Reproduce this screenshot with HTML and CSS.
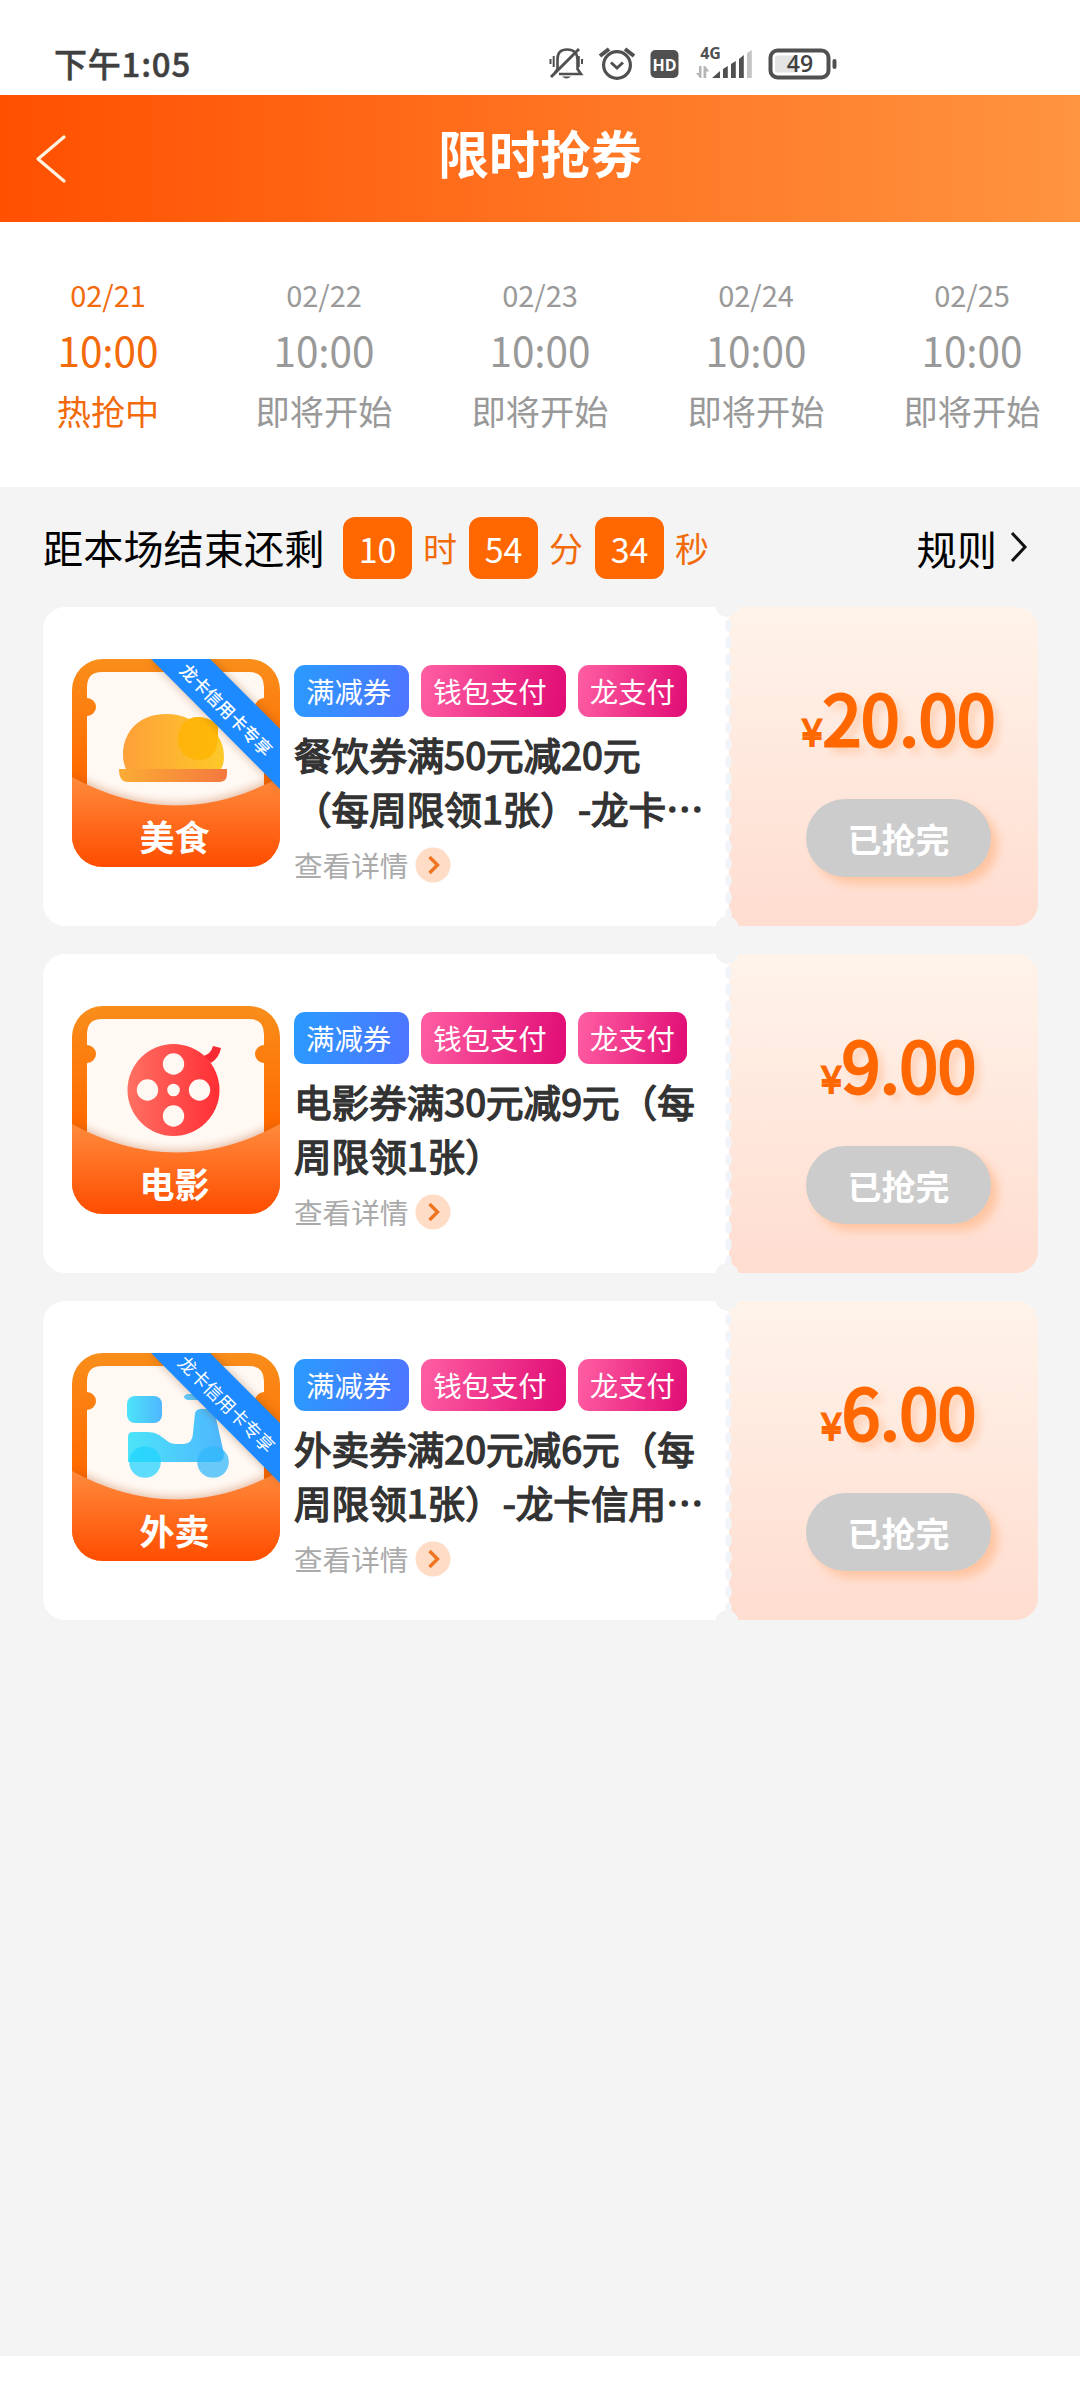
FILE: index.html
```html
<!DOCTYPE html>
<html lang="zh-CN">
<head>
<meta charset="utf-8">
<title>限时抢券</title>
<link rel="stylesheet" href="styles.css">
</head>
<body>
<svg width="0" height="0" class="defs" aria-hidden="true">
  <defs>
    <linearGradient id="frame" x1="0" y1="0" x2="0" y2="1"><stop offset="0" stop-color="#f98e1b"/><stop offset=".55" stop-color="#ff6b00"/></linearGradient>
    <linearGradient id="pocket" x1="0" y1="0" x2="0" y2="1"><stop offset="0" stop-color="#ff8a3c"/><stop offset="1" stop-color="#ff4d00"/></linearGradient>
    <linearGradient id="dome" x1="0" y1="0" x2="1" y2="0"><stop offset="0" stop-color="#ffa03a"/><stop offset="1" stop-color="#fdc928"/></linearGradient>
    <linearGradient id="plate" x1="0" y1="0" x2="1" y2="0"><stop offset="0" stop-color="#fbac35"/><stop offset="1" stop-color="#f4783f"/></linearGradient>
    <linearGradient id="reel" x1="0" y1="0" x2="1" y2="0"><stop offset="0" stop-color="#ff7063"/><stop offset="1" stop-color="#ff2e35"/></linearGradient>
    <linearGradient id="moto" x1="0" y1="0" x2="1" y2="0"><stop offset="0" stop-color="#4ce4f8"/><stop offset="1" stop-color="#4fb6ff"/></linearGradient>
    <filter id="soft" x="-20%" y="-20%" width="140%" height="140%"><feGaussianBlur stdDeviation="5"/></filter>
    <clipPath id="tile"><rect width="208" height="208" rx="31"/></clipPath>
    <g id="tileBack">
      <rect width="208" height="208" fill="url(#frame)"/>
      <path d="M15 210V57a9 9 0 0 0 0-18V28Q15 13 30 13H177Q192 13 192 28V39a9 9 0 0 0 0 18V210Z" fill="#fff8f3"/>
    </g>
    <g id="tilePocket">
      <path d="M0 116Q104 174 208 116V208H0Z" fill="#b24a10" opacity=".38" filter="url(#soft)"/>
      <path d="M0 118Q104 175 208 118V208H0Z" fill="url(#pocket)"/>
    </g>
    <g id="ribbon">
      <path d="M79 0H138L208 70V130Z" fill="#7a3a10" opacity=".35" filter="url(#soft)"/>
      <path d="M79 0H138L208 70V130Z" fill="#1e8aff"/>
    </g>
  </defs>
</svg>

<header class="status">
  <span class="clock">下午1:05</span>
  <svg class="status-icons" width="300" height="40" viewBox="0 0 300 40" fill="none" stroke="#505050">
    <g stroke-width="2.6">
      <path d="M10 29H32L28.500 24V15Q28.500 4.500 18 4.500Q8.500 4.500 8.500 14V24L6 28"/>
      <path d="M2 32 30 4" stroke-width="3"/>
      <path d="M1.500 14V19M4.700 11V22M33 14V19M29.800 11V22" stroke-width="2"/>
      <path d="M13 31.500h9q-4.500 4-9 0Z" fill="#505050" stroke="none"/>
    </g>
    <g stroke-width="3.200">
      <circle cx="68" cy="20" r="13.400"/><path d="M62 17.500 68 23 74 17.500" stroke-width="3"/>
      <path d="M51 11 60 4M76 4 85 11" stroke-width="4"/>
    </g>
    <rect x="101.500" y="5" width="28" height="28" rx="5" fill="#505050" stroke="none"/>
    <text x="115.500" y="25.500" class="hd">HD</text>
    <text x="161.500" y="13.500" class="net">4G</text>
    <g stroke="none">
      <path d="M150 21h2.500v12h-1.500l-4-5h3ZM154.500 33V21h1.800l4 5.500h-3V33Z" fill="#b5b5b5"/>
      <path d="M163 33 171 26V33ZM174 24l4.800-3V33h-4.800ZM182 19l4.800-3V33h-4.800ZM190 14l4.800-4V33H190Z" fill="#505050"/>
      <path d="M198 8 202.800 5V33h-4.800Z" fill="#c4c4c4"/>
      <rect x="226" y="10.500" width="22" height="17" rx="2" fill="#e4e4e4"/>
      <rect x="283.500" y="14" width="4" height="10" rx="2" fill="#505050"/>
    </g>
    <rect x="221.500" y="5.500" width="58" height="27" rx="7" stroke-width="4"/>
    <text x="251" y="27" class="bat">49</text>
  </svg>
</header>

<nav class="bar">
  <svg class="back" width="32" height="50" viewBox="0 0 32 50"><path d="M29 3 3 25 29 47" fill="none" stroke="#fff3e0" stroke-width="3.200" stroke-linecap="round" stroke-linejoin="round"/></svg>
  <h1>限时抢券</h1>
</nav>

<section class="days">
  <div class="day on"><span class="date">02/21</span><span class="time">10:00</span><span class="state">热抢中</span></div>
  <div class="day"><span class="date">02/22</span><span class="time">10:00</span><span class="state">即将开始</span></div>
  <div class="day"><span class="date">02/23</span><span class="time">10:00</span><span class="state">即将开始</span></div>
  <div class="day"><span class="date">02/24</span><span class="time">10:00</span><span class="state">即将开始</span></div>
  <div class="day"><span class="date">02/25</span><span class="time">10:00</span><span class="state">即将开始</span></div>
</section>

<main>
  <div class="countdown">
    <span class="label">距本场结束还剩</span>
    <b class="num">10</b><span class="unit">时</span>
    <b class="num">54</b><span class="unit">分</span>
    <b class="num">34</b><span class="unit">秒</span>
    <span class="rules">规则</span>
    <svg class="more" width="20" height="34" viewBox="0 0 20 34"><path d="M3 3 16 17 3 31" fill="none" stroke="#111" stroke-width="3"/></svg>
  </div>

  <article class="card">
    <div class="info">
      <svg class="tile" width="208" height="208" viewBox="0 0 208 208">
        <g clip-path="url(#tile)">
          <use href="#tileBack"/>
          <path d="M54 110Q51 103 51 96C51 70 70 55 94 55Q107 55 117 60Q131 54 146 66V77Q152 86 152 98Q152 105 149 110Z" fill="url(#dome)"/>
          <path d="M117 60Q131 54 146 66V77Q146 101 126 101Q106 99 106 79Q107 65 117 60Z" fill="#ffb300" opacity=".75"/>
          <path d="M47 110H155V115Q155 123 147 123H56Q47 123 47 110Z" fill="url(#plate)"/>
          <use href="#tilePocket"/>
          <use href="#ribbon"/>
        </g>
        <text class="ribbon-text" transform="translate(149.500 55.500) rotate(45)">龙卡信用卡专享</text>
        <text class="tile-name" x="102.500" y="192">美食</text>
      </svg>
      <div class="body">
        <div class="tags"><span class="tag blue">满减券</span><span class="tag wide">钱包支付</span><span class="tag">龙支付</span></div>
        <h2><span>餐饮券满50元减20元</span><span>（每周限领1张）-龙卡…</span></h2>
        <div class="detail">查看详情<svg width="36" height="36" viewBox="0 0 36 36"><circle cx="18" cy="18" r="17.500" fill="#ffdcc6"/><path d="M14.500 10 22.500 18 14.500 26" fill="none" stroke="#ee7420" stroke-width="3.400"/></svg></div>
      </div>
    </div>
    <div class="offer"><div class="price"><small>¥</small>20.00</div><button>已抢完</button></div>
  </article>

  <article class="card">
    <div class="info">
      <svg class="tile" width="208" height="208" viewBox="0 0 208 208">
        <g clip-path="url(#tile)">
          <use href="#tileBack"/>
          <path d="M131 50Q139 48 141 40L149 42Q147 52 139 57Z" fill="#f52a33"/>
          <circle cx="101.500" cy="84" r="46" fill="url(#reel)"/>
          <g fill="#fff8f3"><circle cx="101.500" cy="58" r="10.700"/><circle cx="75.500" cy="84" r="10.700"/><circle cx="127.500" cy="84" r="10.700"/><circle cx="101.500" cy="110" r="10.700"/><circle cx="101.500" cy="84" r="6.300"/></g>
          <use href="#tilePocket"/>
        </g>
        <text class="tile-name" x="102.500" y="192">电影</text>
      </svg>
      <div class="body">
        <div class="tags"><span class="tag blue">满减券</span><span class="tag wide">钱包支付</span><span class="tag">龙支付</span></div>
        <h2><span>电影券满30元减9元（每</span><span>周限领1张）</span></h2>
        <div class="detail">查看详情<svg width="36" height="36" viewBox="0 0 36 36"><circle cx="18" cy="18" r="17.500" fill="#ffdcc6"/><path d="M14.500 10 22.500 18 14.500 26" fill="none" stroke="#ee7420" stroke-width="3.400"/></svg></div>
      </div>
    </div>
    <div class="offer"><div class="price"><small>¥</small>9.00</div><button>已抢完</button></div>
  </article>

  <article class="card">
    <div class="info">
      <svg class="tile" width="208" height="208" viewBox="0 0 208 208">
        <g clip-path="url(#tile)">
          <use href="#tileBack"/>
          <rect x="55" y="43" width="35" height="27" rx="8" fill="url(#moto)"/>
          <path d="M56 109V84Q56 79 61 79H75C91 79 93 91 104 91H112Q121 90 121 80L123 60Q125 55 133 56H142L152 101Q152 109 145 109Z" fill="url(#moto)"/>
          <path d="M115 41H140V47H117Q112 47 112 43Z" fill="#5fcbff"/>
          <circle cx="73" cy="109" r="15.800" fill="#1fd2fd" opacity=".72"/><circle cx="141" cy="109" r="15.800" fill="#2fb8fb" opacity=".72"/>
          <use href="#tilePocket"/>
          <use href="#ribbon"/>
        </g>
        <text class="ribbon-text thin" transform="translate(149.500 56) rotate(45)">龙卡信用卡专享</text>
        <text class="tile-name" x="102.500" y="192">外卖</text>
      </svg>
      <div class="body">
        <div class="tags"><span class="tag blue">满减券</span><span class="tag wide">钱包支付</span><span class="tag">龙支付</span></div>
        <h2><span>外卖券满20元减6元（每</span><span>周限领1张）-龙卡信用…</span></h2>
        <div class="detail">查看详情<svg width="36" height="36" viewBox="0 0 36 36"><circle cx="18" cy="18" r="17.500" fill="#ffdcc6"/><path d="M14.500 10 22.500 18 14.500 26" fill="none" stroke="#ee7420" stroke-width="3.400"/></svg></div>
      </div>
    </div>
    <div class="offer"><div class="price"><small>¥</small>6.00</div><button>已抢完</button></div>
  </article>
</main>
</body>
</html>
```
FILE: styles.css
```css
* { box-sizing: border-box; }
body { margin: 0; width: 1080px; height: 2400px; background: #fff; font-family: "Noto Sans CJK SC", sans-serif; display: flex; flex-direction: column; overflow: hidden; }
.defs { position: absolute; }
h1, h2 { margin: 0; }

.status { height: 95px; padding-left: 54px; display: flex; align-items: flex-start; }
.clock { width: 495px; padding-top: 42px; font-size: 33px; line-height: 42px; font-weight: 500; letter-spacing: 0.8px; color: #404040; -webkit-text-stroke: 0.5px #404040; }
.status-icons { margin-top: 45px; overflow: visible; }
.status-icons text { stroke: none; text-anchor: middle; font-family: "Open Sans", sans-serif; }
.hd { fill: #fff; font-size: 16px; font-weight: 700; }
.net { fill: #505050; font-size: 16px; font-weight: 700; }
.bat { fill: #404040; font-size: 23px; font-weight: 600; }

.bar { height: 127px; padding-left: 35px; display: flex; align-items: center; background: linear-gradient(90deg, #ff5000, #ff9440); }
.back { flex: none; }
.bar h1 { flex: 1; margin: 0 67px 13px 0; text-align: center; font-size: 51px; line-height: 70px; font-weight: 700; color: #fff; }

.days { height: 265px; display: grid; grid-template-columns: repeat(5, 1fr); padding-top: 49px; }
.day { display: flex; flex-direction: column; align-items: center; color: #999; }
.day.on { color: #f26a0a; }
.date { font-size: 29px; line-height: 46px; }
.time { font-size: 40.500px; line-height: 66px; }
.state { font-size: 34.200px; line-height: 54px; }

main { height: 1869px; background: #f4f4f4; padding: 0 42px 0 43px; display: flex; flex-direction: column; gap: 28px; }
.countdown { height: 92px; padding-top: 30px; display: flex; align-items: center; font-size: 34px; }
.label, .rules { font-size: 40.200px; line-height: 60px; color: #000; }
.label { width: 300px; margin-top: -3px; }
.num { width: 69px; height: 62px; border-radius: 12px; background: #ff6700; color: #fff; font-weight: 400; line-height: 63px; text-align: center; }
.unit { width: 57px; padding-left: 11px; line-height: 62px; color: #f26a0a; }
.rules { margin-left: auto; }
.more { margin: -2px 9px 0 12px; }

.card { position: relative; height: 319px; display: flex; }
/* tear line with a half-round notch at each end */
.card::after {
  content: ""; position: absolute; left: 671px; top: 0; width: 26px; height: 100%;
  background:
    radial-gradient(circle 12px at 13px -2px, #f4f4f4 11.500px, transparent 12px),
    radial-gradient(circle 12px at 13px 321px, #f4f4f4 11.500px, transparent 12px),
    radial-gradient(ellipse 3.500px 7px at 50% 50%, #f1f5fa 80%, transparent) 0 10px / 29px 17px repeat-y;
}
.info { width: 686px; padding: 52px 0 0 29px; display: flex; gap: 14px; border-radius: 22px 0 0 22px; background: #fff; }
.tile { flex: none; overflow: visible; }
.tile-name { font-size: 35px; font-weight: 700; fill: #fff; text-anchor: middle; }
.ribbon-text { font-size: 17.400px; font-weight: 500; fill: #fff; text-anchor: middle; }
.ribbon-text.thin { font-size: 18.200px; font-weight: 400; }
.body { display: flex; flex-direction: column; padding-top: 6px; white-space: nowrap; }
.tags { display: flex; gap: 12px; }
.tag { height: 52px; padding: 0 12px; border-radius: 11px; font-size: 28.400px; line-height: 52px; color: #fff; background: linear-gradient(100deg, #ff5fa3, #e00b74); }
.tag.wide { padding-right: 19px; }
.tag.blue { padding-right: 18px; background: linear-gradient(100deg, #2a9bff, #4f74ff); }
h2 { margin-top: 10px; font-size: 37.600px; line-height: 54px; font-weight: 400; color: #333; -webkit-text-stroke: 1.400px #333; }
h2 span { display: block; }
.detail { display: flex; align-items: center; gap: 7px; margin-top: 12px; font-size: 28.600px; line-height: 36px; color: #aaa; }

.offer { flex: 1; padding: 59px 0 0 77px; border-radius: 0 22px 22px 0; background: linear-gradient(#fff3ea, #ffddd0); }
.price { width: 185px; height: 100px; display: flex; justify-content: center; align-items: baseline; font-size: 69.200px; line-height: 101px; color: #ff6700; font-weight: 400; -webkit-text-stroke: 3px #ff6700; text-shadow: 6px 6px 8px #ffc7a5; white-space: nowrap; }
.price small { font-size: 38px; -webkit-text-stroke: 1.800px #ff6700; text-shadow: none; }
.offer button { display: block; width: 185px; height: 78px; margin: 33px 0 0; padding: 2px 0 0; border: 0; border-radius: 39px; background: #ccc; box-shadow: 7px 7px 10px #ffc5a2; color: #fff; font: 700 34px/76px "Noto Sans CJK SC", sans-serif; }
```
